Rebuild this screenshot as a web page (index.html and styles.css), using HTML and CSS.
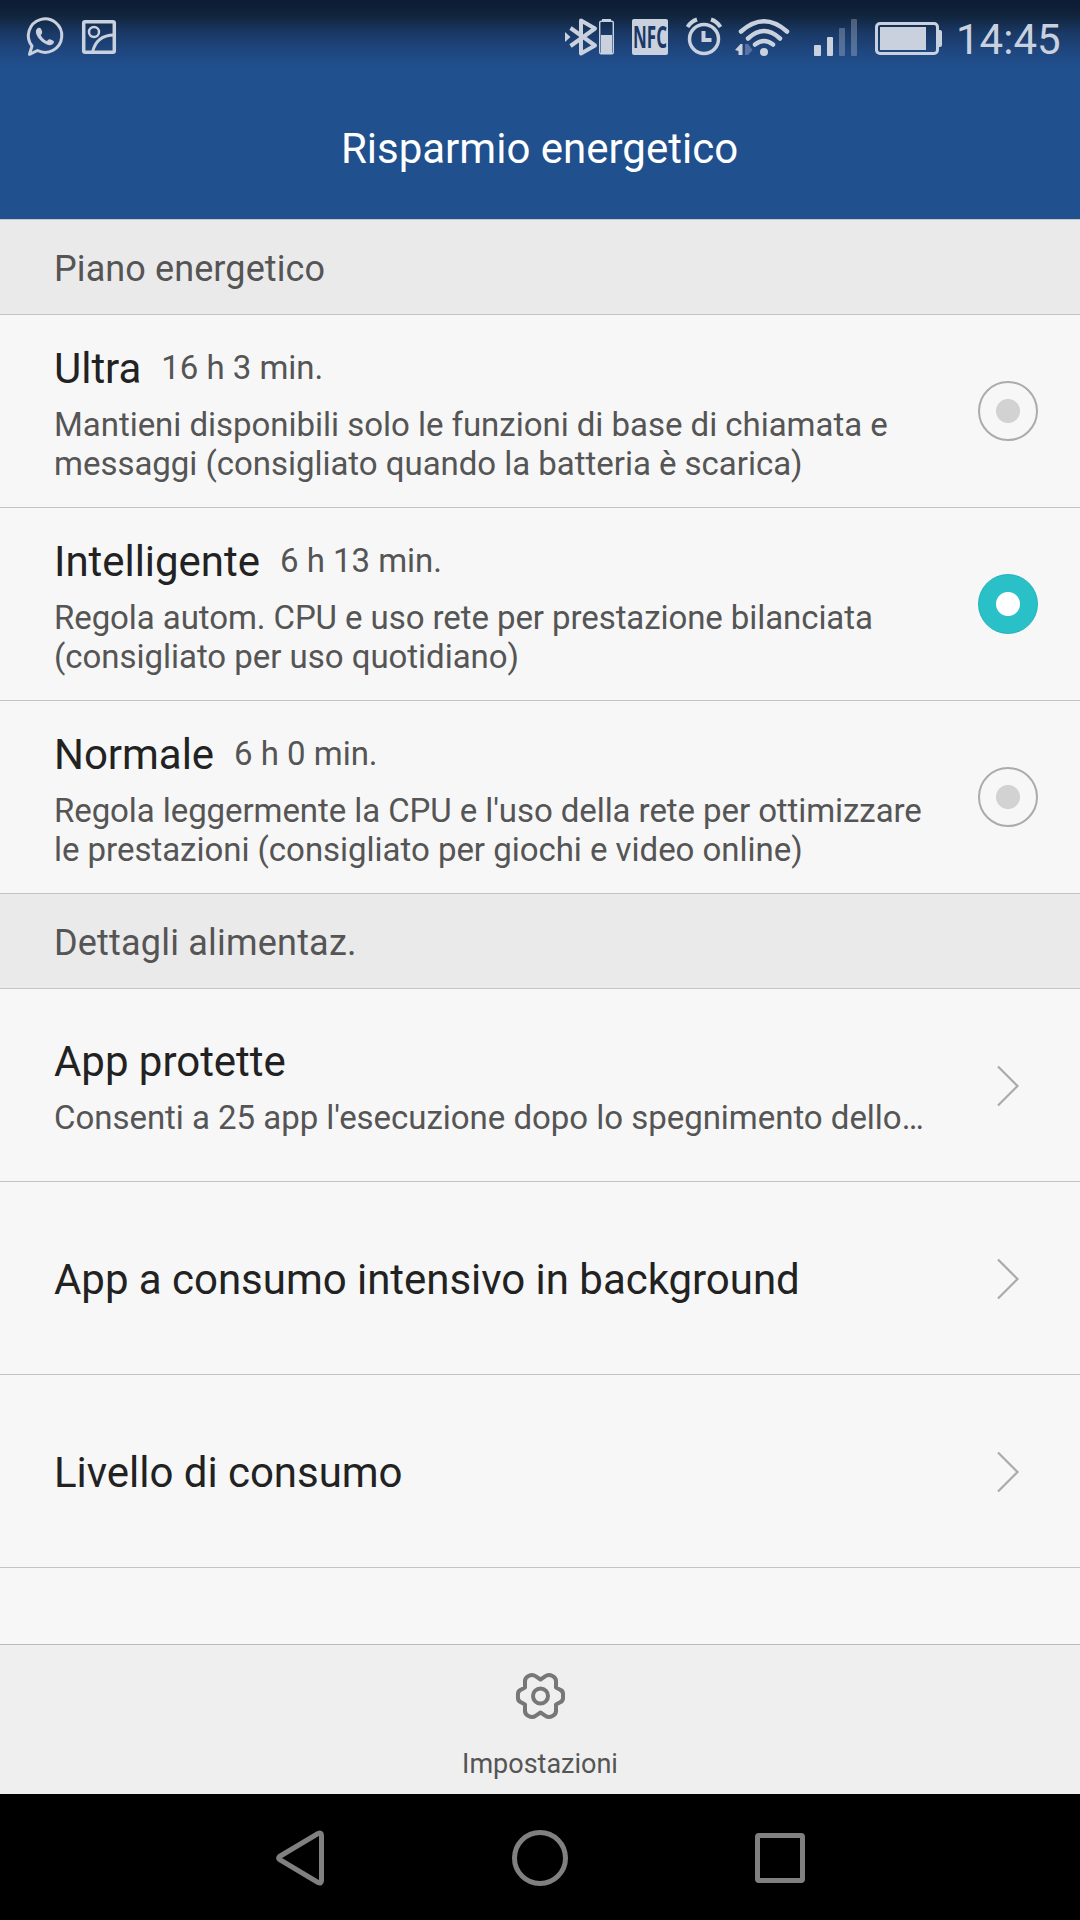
FILE: index.html
```html
<!DOCTYPE html>
<html lang="it">
<head>
<meta charset="utf-8">
<title>Risparmio energetico</title>
<link rel="stylesheet" href="styles.css">
</head>
<body>
<div class="screen">
  <header class="header">
    <div class="status">
      <svg class="status-icons" width="130" height="74" viewBox="0 0 130 74" fill="none" stroke="#c9d1df" stroke-width="3">
        <path d="M29.500 54.300L32 46A16.700 16.700 0 1 1 37.500 50.500Z" stroke-linejoin="round"/>
        <path d="M38 28c2-1 3 0 4 3c.6 2-.2 3-1.300 4c1.500 3 3 4.500 6.300 6.200c1-1.500 2-2.200 3.500-1.700c3 1 4 1.700 3.300 3.300c-1 2.200-4 3-7 1.700c-5-2-9.500-6.500-10.700-11.200c-.6-2.400 .3-4.500 1.900-5.300z" fill="#c9d1df" stroke="none"/>
        <rect x="83.700" y="21.700" width="30.600" height="30.600" rx="1.500" stroke-width="3.500"/>
        <circle cx="94" cy="32" r="5" stroke-width="2.500"/>
        <path d="M92.500 52C95 42 102 35 114 35"/>
      </svg>
      <div class="status-right">
        <svg class="status-icons" width="400" height="74" viewBox="550 0 400 74" fill="none" stroke="#c9d1df" stroke-width="4">
          <path d="M570.500 28L595 45.500L581 53.500V20.500L595 28.500L570.500 46" stroke-linejoin="round"/>
          <path d="M565 32l5.500 5l-5.500 5z" fill="#c9d1df" stroke="none"/>
          <rect x="599.700" y="21.200" width="13.600" height="32.600" rx="1.500" stroke-width="1.400"/>
          <path d="M602 20h9" stroke-width="2"/>
          <path d="M601 35h11v18h-11z" fill="#c9d1df" stroke="none"/>
          <rect x="632" y="19" width="36" height="36" rx="2" fill="#c9d1df" stroke="none"/>
          <text class="nfc" x="633" y="48" textLength="34" lengthAdjust="spacingAndGlyphs">NFC</text>
          <circle cx="704" cy="39" r="14.500" stroke-width="3.500"/>
          <path d="M703.500 31v9h8"/>
          <path d="M687.500 27Q691 21.500 697 19.500M720.500 27Q717 21.500 711 19.500"/>
          <path d="M741 31.500Q764 11 787 31.500M748 38.500Q764 23.500 780 38.500M755 44.500Q764 37.500 773 44.500" stroke-width="4.500" stroke-linecap="round"/>
          <circle cx="764" cy="52" r="4" fill="#c9d1df" stroke="none"/>
          <path d="M735 50l5.500-6h2v11h-4v-4z" fill="#c9d1df" stroke="none"/>
          <path d="M745 44h3l4.500 6l-4.500 5h-3z" fill="#5873a3" stroke="none"/>
          <g stroke="none" fill="#c9d1df">
            <rect x="814" y="45" width="7" height="11" rx="1"/>
            <rect x="827" y="37" width="6" height="19" rx="1"/>
            <rect x="839" y="28" width="6" height="28" rx="1" opacity=".32"/>
            <rect x="851" y="19" width="6" height="37" rx="1" opacity=".32"/>
            <rect x="880" y="27" width="46" height="23"/>
            <path d="M938 30h2q2 0 2 2v13q0 2-2 2h-2z"/>
          </g>
          <rect x="876.500" y="23.500" width="61" height="30" rx="3.500" stroke-width="3"/>
        </svg>
        <span class="clock">14:45</span>
      </div>
    </div>
    <h1 class="title">Risparmio energetico</h1>
  </header>
  <main class="list">
    <h2 class="section">Piano energetico</h2>
    <div class="row">
      <div class="text">
        <div class="name">Ultra<span class="time">16 h 3 min.</span></div>
        <div class="desc">Mantieni disponibili solo le funzioni di base di chiamata e<br>messaggi (consigliato quando la batteria è scarica)</div>
      </div>
      <span class="radio"></span>
    </div>
    <div class="row">
      <div class="text">
        <div class="name">Intelligente<span class="time">6 h 13 min.</span></div>
        <div class="desc"><span class="tight">Regola autom. CPU e uso rete per prestazione bilanciata</span><br>(consigliato per uso quotidiano)</div>
      </div>
      <span class="radio radio-on"></span>
    </div>
    <div class="row">
      <div class="text">
        <div class="name">Normale<span class="time">6 h 0 min.</span></div>
        <div class="desc"><span class="tight">Regola leggermente la CPU e l'uso della rete per ottimizzare</span><br>le prestazioni (consigliato per giochi e video online)</div>
      </div>
      <span class="radio"></span>
    </div>
    <h2 class="section section-wide">Dettagli alimentaz.</h2>
    <div class="row">
      <div class="text">
        <div class="name">App protette</div>
        <div class="desc">Consenti a 25 app l'esecuzione dopo lo spegnimento dello…</div>
      </div>
      <svg class="chevron" width="24" height="44" viewBox="0 0 24 44"><path d="M2 2.500L21.500 22L2 41.500"/></svg>
    </div>
    <div class="row">
      <div class="text"><div class="name">App a consumo intensivo in background</div></div>
      <svg class="chevron" width="24" height="44" viewBox="0 0 24 44"><path d="M2 2.500L21.500 22L2 41.500"/></svg>
    </div>
    <div class="row">
      <div class="text"><div class="name">Livello di consumo</div></div>
      <svg class="chevron" width="24" height="44" viewBox="0 0 24 44"><path d="M2 2.500L21.500 22L2 41.500"/></svg>
    </div>
  </main>
  <footer class="footer">
    <svg width="50" height="48" viewBox="-0.500 0 50 48" fill="none" stroke="#777" stroke-width="4" stroke-linejoin="round">
      <path d="M25 7.500L30 4.200Q33 2 37 4Q41 6 40.500 10L40.500 15.500L45 18Q48 19 47.500 24Q48 29 45 30L40.500 32.500L40.500 38Q41 42 37 44Q33 46 30 43.800L25 40.500L20 43.800Q17 46 13 44Q9 42 9.500 38L9.500 32.500L5 30Q2 29 2.500 24Q2 19 5 18L9.500 15.500L9.500 10Q9 6 13 4Q17 2 20 4.200Z"/>
      <circle cx="25" cy="24" r="7.500"/>
    </svg>
    <span class="footer-label">Impostazioni</span>
  </footer>
  <nav class="nav">
    <svg width="60" height="60" viewBox="0 0 60 60"><path d="M9.500 28.500L48 5.500Q51.500 4 51.500 7.500V52.500Q51.500 56 48 54.500L9.500 31.500Q8 30 9.500 28.500Z"/></svg>
    <svg width="60" height="60" viewBox="0 0 60 60"><circle cx="30" cy="30" r="25.500"/></svg>
    <svg width="60" height="60" viewBox="0 0 60 60"><rect x="7.500" y="7.500" width="45" height="45" rx="1.500"/></svg>
  </nav>
</div>
</body>
</html>
```
FILE: styles.css
```css
* { box-sizing: border-box; }
body { margin: 0; background: #000; font-family: Roboto, "Liberation Sans", sans-serif; }
h1, h2 { margin: 0; font-weight: 400; }
.screen { width: 1080px; height: 1920px; display: flex; flex-direction: column; background: #f7f7f7; overflow: hidden; }
.header { height: 220px; flex: none; border-bottom: 1px solid #c8c8cc; background: linear-gradient(#0d1d35 0, #0d1d35 6px, #12263f 17px, #1a3966 33px, #1f4882 53px, #20508d 68px, #20508d 100%); color: #fff; }
.status { height: 74px; display: flex; justify-content: space-between; }
.status-icons { display: block; flex: none; }
.status-right { display: flex; width: 530px; }
.nfc { font: 700 30px "Open Sans", sans-serif; fill: #1a3966; stroke: none; }
.clock { font-size: 42px; line-height: 49px; padding-top: 15px; margin-left: 6px; color: #c9d1df; }
.title { font-size: 42px; line-height: 49px; margin-top: 50px; padding-right: 1px; text-align: center; }
.section { height: 95px; padding: 28px 54px 0; font-size: 36px; line-height: 42px; letter-spacing: .1px; color: #555; background: #eaeaea; border-bottom: 1px solid #c4c4c4; }
.section-wide { letter-spacing: .2px; }
.row { height: 193px; padding: 2px 42px 0 54px; display: flex; align-items: center; border-bottom: 1px solid #c4c4c4; }
.text { flex: 1; white-space: nowrap; }
.name { font-size: 42px; line-height: 49px; letter-spacing: -.03px; color: #222; }
.time { font-size: 33px; line-height: 39px; color: #555; margin-left: 20px; position: relative; top: -4px; }
.desc { font-size: 33px; line-height: 39px; margin-top: 12px; padding-bottom: 0; letter-spacing: -.03px; color: #555; }
.name:not(:last-child) { margin-top: 2px; }
.tight { letter-spacing: -.08px; }
.radio { width: 60px; height: 60px; flex: none; margin-top: -2px; border: 2px solid #ababab; border-radius: 50%; background: radial-gradient(circle, #d2d2d2 11.500px, transparent 12.500px); }
.radio-on { border: 1px solid #24b3bb; background: radial-gradient(circle, #fff 11.500px, #29c0c8 12.500px); }
.chevron { flex: none; margin-right: 18px; fill: none; stroke: #aaa; stroke-width: 2.200; }
.footer { margin-top: auto; height: 150px; flex: none; display: flex; flex-direction: column; align-items: center; padding-top: 27px; background: #efefef; border-top: 1px solid #bbb; }
.footer-label { font-size: 27px; line-height: 32px; margin-top: 28px; color: #555; }
.nav { height: 126px; flex: none; padding-top: 2px; display: flex; justify-content: center; align-items: center; gap: 180px; background: #000; }
.nav svg { fill: none; stroke: #808080; stroke-width: 5; }
```
